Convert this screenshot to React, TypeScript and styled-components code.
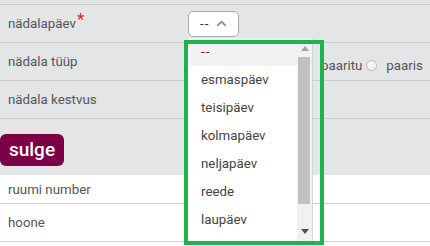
import React from "react"
import styled, { createGlobalStyle } from "styled-components"
import { ChevronUp } from "lucide-react"

const GlobalStyle = createGlobalStyle`
  html, body {
    margin: 0;
    padding: 0;
    background: #ffffff;
    font-family: Roboto, "Liberation Sans", sans-serif;
    overflow: hidden;
  }
`

const days = ["--", "esmaspäev", "teisipäev", "kolmapäev", "neljapäev", "reede", "laupäev"]

export default function App() {
  return (
    <>
      <GlobalStyle />
      <Page>
        <GraySection>
          <FormRow>
            <Label>
              nädalapäev<Required>*</Required>
            </Label>
            <Value>
              <SelectBox>
                <Dashes>--</Dashes>
                <ChevronUp size={15} strokeWidth={2.6} color="#8a8a8a" />
              </SelectBox>
            </Value>
          </FormRow>
          <FormRow>
            <Label>nädala tüüp</Label>
            <Value>
              <RadioGroup>
                <RadioOption>
                  <Radio />
                  paaritu
                </RadioOption>
                <RadioOption>
                  <Radio />
                  paaris
                </RadioOption>
              </RadioGroup>
            </Value>
          </FormRow>
          <FormRow>
            <Label>nädala kestvus</Label>
            <Value />
          </FormRow>
          <ButtonBar>
            <CloseButton>sulge</CloseButton>
          </ButtonBar>
        </GraySection>
        <WhiteSection>
          <InfoRow height={28}>
            <Label>ruumi number</Label>
          </InfoRow>
          <InfoRow height={37}>
            <Label>hoone</Label>
          </InfoRow>
        </WhiteSection>

        <DropList>
          <Options>
            {days.map((d, i) => (
              <Option key={d} selected={i === 0}>
                {d}
              </Option>
            ))}
          </Options>
          <ScrollTrack>
            <ScrollArrow>
              <svg width="8" height="5" viewBox="0 0 8 5">
                <path d="M0 5 L4 0 L8 5 Z" fill="#a3a3a3" />
              </svg>
            </ScrollArrow>
            <ScrollThumb />
            <TrackSpacer />
            <ScrollArrow>
              <svg width="8" height="5" viewBox="0 0 8 5">
                <path d="M0 0 L8 0 L4 5 Z" fill="#505050" />
              </svg>
            </ScrollArrow>
          </ScrollTrack>
        </DropList>
        <Highlight />
      </Page>
    </>
  )
}

const Page = styled.div`
  position: relative;
  width: 430px;
  height: 246px;
  overflow: hidden;
`

const GraySection = styled.section`
  background: #e4e5e7;
  padding-top: 4px;
`

const FormRow = styled.div`
  display: grid;
  grid-template-columns: 188px 1fr;
  height: 37px;
  border-top: 1px solid #cbcbcb;
  align-items: center;
`

const Label = styled.span`
  padding-left: 8px;
  font-size: 13.3px;
  color: #555555;
  white-space: nowrap;
`

const Required = styled.sup`
  color: #e8231d;
  font-size: 17px;
  line-height: 0;
  position: relative;
  top: 2px;
  margin-left: 1px;
`

const Value = styled.div`
  display: flex;
  align-items: center;
  height: 100%;
`

const SelectBox = styled.div`
  box-sizing: border-box;
  width: 51px;
  height: 26px;
  display: flex;
  align-items: center;
  gap: 5px;
  padding-left: 11px;
  background: #ffffff;
  border: 1px solid #ababab;
  border-radius: 5px;
  font-size: 13.3px;
  color: #333333;
`

const Dashes = styled.span`
  letter-spacing: 1px;
`

const RadioGroup = styled.div`
  display: flex;
  align-items: center;
  gap: 4px;
  padding-left: 113px;
  padding-top: 8px;
  font-size: 13.3px;
  color: #555555;
  white-space: nowrap;
`

const RadioOption = styled.label`
  display: flex;
  align-items: center;
  gap: 9px;
`

const Radio = styled.span`
  box-sizing: border-box;
  width: 11px;
  height: 11px;
  border-radius: 50%;
  border: 1px solid #b9b9b9;
  background: #f4f4f4;
`

const ButtonBar = styled.div`
  border-top: 1px solid #cbcbcb;
  padding: 15px 0 9px;
`

const CloseButton = styled.button`
  width: 64px;
  height: 32px;
  border: none;
  border-radius: 6px;
  background: #7c0047;
  color: #ffffff;
  font-family: Roboto, "Liberation Sans", sans-serif;
  font-size: 19px;
  font-weight: 500;
  padding: 0 0 2px 0;
`

const WhiteSection = styled.section`
  background: #ffffff;
`

const InfoRow = styled.div<{ height: number }>`
  display: flex;
  align-items: center;
  height: ${({ height }) => height}px;
  border-bottom: 1px solid #cfcfcf;
`

const DropList = styled.div`
  position: absolute;
  left: 188px;
  top: 38px;
  width: 125px;
  height: 203px;
  box-sizing: border-box;
  display: flex;
  background: #ffffff;
  border-right: 1px solid #d4d4d4;
  overflow: hidden;
`

const Options = styled.ul`
  flex: 1;
  margin: 0;
  padding: 0;
  list-style: none;
`

const Option = styled.li<{ selected?: boolean }>`
  height: 28px;
  line-height: 28px;
  margin-left: ${({ selected }) => (selected ? "2px" : "0")};
  padding-left: ${({ selected }) => (selected ? "11px" : "13px")};
  font-size: 13.3px;
  letter-spacing: ${({ selected }) => (selected ? "1px" : "normal")};
  color: ${({ selected }) => (selected ? "#7c0030" : "#444444")};
  background: ${({ selected }) => (selected ? "#f2f2f2" : "transparent")};
`

const ScrollTrack = styled.div`
  width: 15px;
  display: flex;
  flex-direction: column;
  background: #f1f1f1;
  padding-top: 3px;
  padding-bottom: 2px;
`

const ScrollArrow = styled.div`
  height: 15px;
  display: flex;
  align-items: center;
  justify-content: center;
`

const ScrollThumb = styled.div`
  height: 147px;
  margin: 1px 2px 0 1px;
  background: #c1c1c1;
`

const TrackSpacer = styled.div`
  flex: 1;
`

const Highlight = styled.div`
  position: absolute;
  left: 184px;
  top: 40px;
  width: 140px;
  height: 205px;
  box-sizing: border-box;
  border: 4px solid #22b24c;
  pointer-events: none;
`
